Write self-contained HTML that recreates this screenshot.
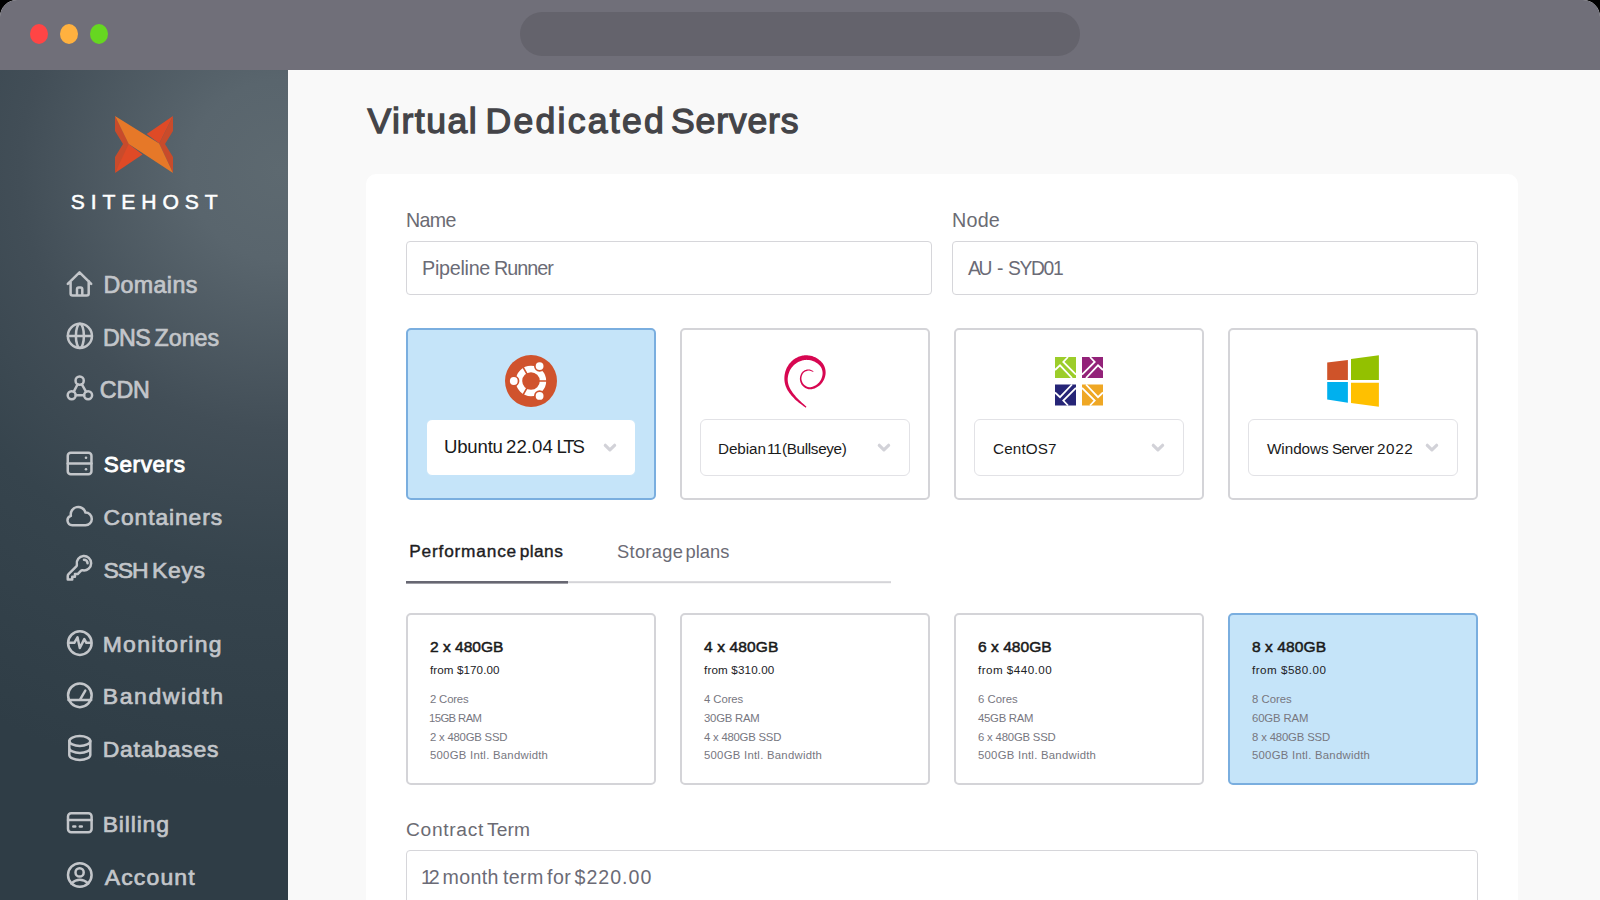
<!DOCTYPE html>
<html><head><meta charset="utf-8">
<style>
*{box-sizing:border-box;margin:0;padding:0}
html,body{width:1600px;height:900px;overflow:hidden;background:#000;font-family:"Liberation Sans",sans-serif}
#win{position:absolute;left:0;top:0;width:1600px;height:900px;border-radius:17px 17px 0 0;overflow:hidden;background:#f9f9f9}
#bar{position:absolute;left:0;top:0;width:1600px;height:70px;background:#706f79}
.dot{position:absolute;top:24px;width:18px;height:20px;border-radius:50%}
#url{position:absolute;left:520px;top:12px;width:560px;height:44px;border-radius:22px;background:#64636c}
#side{position:absolute;left:0;top:70px;width:288px;height:830px;background:radial-gradient(circle at 280px 100px,#5d6970 0px,#59656d 90px,#424e57 260px,#36444d 400px,#2f3d46 620px)}
.t{position:absolute;white-space:nowrap;line-height:1}
.abs{position:absolute}
#card{position:absolute;left:366px;top:174px;width:1152px;height:760px;background:#fff;border-radius:10px}
.inp{position:absolute;height:54px;border:1px solid #d6d6da;border-radius:4px;background:#fff}
.os{position:absolute;top:328px;width:250px;height:172px;border:2px solid #d4d4d8;border-radius:5px;background:#fff}
.sel{border-color:#7aaedf !important;background:#c5e4f9 !important}
.sl{position:absolute;left:18px;top:89px;width:210px;height:57px;border:1px solid #e2e2e6;border-radius:6px;background:#fff}
.sel .sl{border-color:#c5e4f9}
.plan{position:absolute;top:613px;width:250px;height:172px;border:2px solid #d4d4d8;border-radius:5px;background:#fff}
</style></head><body>
<div id="win">
<div id="bar">
 <div class="dot" style="left:30px;background:#ff4545"></div>
 <div class="dot" style="left:60px;background:#ffb13f"></div>
 <div class="dot" style="left:90px;background:#66d721"></div>
 <div id="url"></div>
</div>
<div id="side"></div>
<svg class="abs" style="left:0;top:0" width="288" height="900" viewBox="0 0 288 900">
 <g transform="translate(115 116)">
  <polygon points="0,0 15,30 0,57 0,41 8,28 0,15" fill="#c84b2b"/>
  <polygon points="13.75,28 27.5,38.5 0,57" fill="#df4a26"/>
  <polygon points="58,0 58,15 50,28 58,41 58,57 44.2,27.5" fill="#c84b2b"/>
  <polygon points="31.7,17.9 58,0 44.2,27.5" fill="#df4a26"/>
  <polygon points="0,0 44.2,27.5 58,57 13.75,28" fill="#e67828"/>
 </g>
 <g fill="none" stroke="#c3c6ca" stroke-width="2.5" stroke-linecap="round" stroke-linejoin="round">
  <path d="M67.8 283.9 L79.5 272.3 L91.2 283.9 M70.6 281 V293.5 Q70.6 295.5 72.6 295.5 H86.7 Q88.7 295.5 88.7 293.5 V281 M77 295.5 V289.3 Q77 287.6 78.7 287.6 H80.6 Q82.3 287.6 82.3 289.3 V295.5"/>
  <circle cx="79.9" cy="335.9" r="12.05"/>
  <ellipse cx="79.9" cy="335.9" rx="4" ry="12.05"/>
  <path d="M67.9 335.9 H91.9"/>
  <circle cx="79.65" cy="380.65" r="4.1"/>
  <circle cx="71.7" cy="395.2" r="4.0"/>
  <circle cx="88.1" cy="395.2" r="4.0"/>
  <path d="M77.6 384.2 L73.8 391.6 M81.7 384.2 L86 391.6 M75.7 395.2 H84.1"/>
  <rect x="67.75" y="452.85" width="23.7" height="21.5" rx="3"/>
  <path d="M67.75 463.6 H91.45"/>
  <path d="M72.3 525.2 A4.8 4.8 0 0 1 70.86 515.83 A7.5 7.5 0 0 1 85.5 512.6 A6.3 6.3 0 0 1 85.5 525.2 Z"/>
  <g transform="translate(65.05 553.35) scale(1.2)" stroke-width="2.08">
   <path d="M15.75 5.25a3 3 0 013 3m3 0a6 6 0 01-7.029 5.912c-.563-.097-1.159.026-1.563.43L10.5 17.25H8.25v2.25H6v2.25H2.25v-2.818c0-.597.237-1.17.659-1.591l6.499-6.499c.404-.404.527-1 .43-1.563A6 6 0 1121.75 8.25z"/>
  </g>
  <circle cx="79.85" cy="643.1" r="11.8"/>
  <path d="M69.3 642.8 H74.3 L77.5 637.3 L79.8 648 L84.3 639.1 L86.4 642.8 H90.3"/>
  <circle cx="79.85" cy="695.35" r="11.8"/>
  <path d="M68.5 700 H91.2 M80.2 699.3 L85.3 690.6"/>
  <ellipse cx="79.8" cy="741" rx="10.5" ry="4.9"/>
  <path d="M69.3 741 V755 A10.5 4.9 0 0 0 90.3 755 V741 M69.3 748 A10.5 4.9 0 0 0 90.3 748"/>
  <rect x="68" y="813.2" width="23.6" height="19.1" rx="3.2"/>
  <path d="M68 820 H91.6 M73.3 826.5 H75.3 M79.8 826.5 H81.8"/>
  <circle cx="79.8" cy="875" r="11.8"/>
  <circle cx="79.6" cy="872.4" r="4.1"/>
  <path d="M71.3 883.4 Q79.8 876.2 88.3 883.4"/>
 </g>
 <circle cx="86" cy="457.8" r="1.3" fill="#c3c6ca"/>
 <circle cx="86" cy="469.2" r="1.3" fill="#c3c6ca"/>
</svg>
<div id="card"></div>
<div class="inp" style="left:406px;top:241px;width:526px"></div>
<div class="inp" style="left:952px;top:241px;width:526px"></div>
<div class="os sel" style="left:406px"><div class="sl"></div></div>
<div class="os" style="left:680px"><div class="sl"></div></div>
<div class="os" style="left:954px"><div class="sl"></div></div>
<div class="os" style="left:1228px"><div class="sl"></div></div>
<svg class="abs" style="left:0;top:0" width="1600" height="900" viewBox="0 0 1600 900">
 <g fill="none" stroke="#d2d2d8" stroke-width="3.2" stroke-linecap="round" stroke-linejoin="round">
  <path d="M605.3 445.3 L609.9 449.8 L614.6 445.3"/>
  <path d="M879.3 445.3 L883.9 449.8 L888.6 445.3"/>
  <path d="M1153.3 445.3 L1157.9 449.8 L1162.6 445.3"/>
  <path d="M1427.3 445.3 L1431.9 449.8 L1436.6 445.3"/>
 </g>
 <!-- ubuntu -->
 <g>
  <circle cx="531" cy="381" r="26" fill="#d0532d"/>
  <circle cx="531" cy="381" r="12" fill="none" stroke="#fff" stroke-width="6.4"/>
  <path d="M531 381 L551 381 M531 381 L521 363.7 M531 381 L521 398.3" stroke="#d0532d" stroke-width="1.6"/>
  <circle cx="513.8" cy="381" r="5.6" fill="#d0532d"/>
  <circle cx="539.6" cy="366.1" r="5.6" fill="#d0532d"/>
  <circle cx="539.6" cy="395.9" r="5.6" fill="#d0532d"/>
  <circle cx="513.8" cy="381" r="3.9" fill="#fff"/>
  <circle cx="539.6" cy="366.1" r="3.9" fill="#fff"/>
  <circle cx="539.6" cy="395.9" r="3.9" fill="#fff"/>
 </g>
 <!-- debian -->
 <path fill="#d70751" d="M806.44 406.77 L805.96 406.29 L805.33 405.71 L804.59 405.04 L803.76 404.30 L802.86 403.50 L801.91 402.65 L800.94 401.76 L799.97 400.87 L799.02 399.97 L798.13 399.08 L797.31 398.23 L796.59 397.42 L795.89 396.64 L795.21 395.85 L794.54 395.05 L793.89 394.26 L793.27 393.45 L792.67 392.65 L792.10 391.85 L791.56 391.06 L791.06 390.27 L790.60 389.48 L790.18 388.71 L789.80 387.94 L789.45 387.18 L789.13 386.42 L788.84 385.67 L788.59 384.92 L788.37 384.17 L788.18 383.43 L788.02 382.69 L787.89 381.94 L787.79 381.20 L787.73 380.46 L787.69 379.71 L787.69 378.97 L787.74 378.21 L787.82 377.44 L787.93 376.65 L788.07 375.86 L788.25 375.06 L788.46 374.27 L788.69 373.48 L788.95 372.71 L789.24 371.96 L789.55 371.23 L789.88 370.53 L790.23 369.87 L790.60 369.24 L791.01 368.60 L791.44 367.98 L791.91 367.36 L792.41 366.76 L792.93 366.18 L793.47 365.62 L794.02 365.08 L794.59 364.57 L795.17 364.08 L795.75 363.64 L796.34 363.22 L796.92 362.82 L797.53 362.44 L798.17 362.08 L798.82 361.74 L799.49 361.43 L800.17 361.14 L800.85 360.88 L801.54 360.65 L802.23 360.45 L802.92 360.28 L803.60 360.15 L804.27 360.05 L804.94 359.96 L805.64 359.90 L806.36 359.87 L807.09 359.88 L807.83 359.91 L808.57 359.97 L809.31 360.07 L810.05 360.19 L810.77 360.34 L811.48 360.52 L812.16 360.72 L812.82 360.95 L813.47 361.20 L814.15 361.50 L814.83 361.84 L815.52 362.22 L816.20 362.63 L816.86 363.06 L817.51 363.52 L818.12 363.99 L818.70 364.47 L819.23 364.96 L819.70 365.44 L820.12 365.91 L820.49 366.39 L820.83 366.89 L821.13 367.43 L821.41 367.98 L821.66 368.55 L821.88 369.14 L822.07 369.74 L822.23 370.35 L822.36 370.97 L822.46 371.58 L822.54 372.19 L822.59 372.78 L822.60 373.37 L822.57 373.97 L822.51 374.58 L822.42 375.21 L822.30 375.85 L822.15 376.48 L821.97 377.11 L821.76 377.74 L821.54 378.35 L821.29 378.94 L821.03 379.50 L820.76 380.03 L820.47 380.54 L820.14 381.04 L819.79 381.53 L819.41 382.01 L819.00 382.48 L818.58 382.93 L818.14 383.37 L817.68 383.78 L817.22 384.17 L816.74 384.54 L816.26 384.88 L815.78 385.20 L815.28 385.50 L814.75 385.79 L814.20 386.06 L813.63 386.31 L813.06 386.54 L812.48 386.75 L811.90 386.92 L811.33 387.06 L810.77 387.17 L810.23 387.24 L809.72 387.26 L809.24 387.25 L808.77 387.19 L808.27 387.08 L807.76 386.93 L807.24 386.73 L806.72 386.50 L806.21 386.23 L805.71 385.94 L805.22 385.62 L804.77 385.29 L804.34 384.94 L803.95 384.59 L803.61 384.24 L803.30 383.87 L803.00 383.48 L802.73 383.05 L802.48 382.59 L802.25 382.11 L802.04 381.62 L801.86 381.11 L801.71 380.60 L801.59 380.09 L801.50 379.59 L801.44 379.10 L801.41 378.62 L801.43 378.15 L801.47 377.64 L801.56 377.12 L801.67 376.59 L801.81 376.06 L801.99 375.53 L802.18 375.01 L802.40 374.51 L802.64 374.05 L802.90 373.61 L803.17 373.22 L803.44 372.88 L803.74 372.58 L804.08 372.29 L804.46 372.02 L804.88 371.77 L805.32 371.54 L805.78 371.33 L806.25 371.15 L806.72 370.99 L807.19 370.86 L807.65 370.75 L808.09 370.67 L808.49 370.62 L808.86 370.60 L809.26 370.62 L809.68 370.69 L810.12 370.80 L810.57 370.93 L811.01 371.09 L811.44 371.25 L811.85 371.42 L812.23 371.57 L812.57 371.72 L812.88 371.83 L813.13 371.91 L813.42 371.13 L813.21 371.03 L812.94 370.90 L812.62 370.73 L812.25 370.54 L811.84 370.34 L811.40 370.13 L810.94 369.93 L810.45 369.74 L809.95 369.59 L809.44 369.46 L808.92 369.39 L808.41 369.38 L807.91 369.43 L807.41 369.51 L806.89 369.62 L806.36 369.76 L805.82 369.92 L805.28 370.12 L804.75 370.34 L804.24 370.60 L803.74 370.88 L803.26 371.20 L802.82 371.56 L802.42 371.95 L802.06 372.38 L801.72 372.85 L801.41 373.35 L801.12 373.89 L800.86 374.45 L800.63 375.03 L800.42 375.63 L800.24 376.23 L800.10 376.84 L799.99 377.44 L799.92 378.04 L799.90 378.62 L799.90 379.20 L799.95 379.79 L800.03 380.38 L800.15 380.98 L800.30 381.58 L800.48 382.18 L800.70 382.76 L800.95 383.34 L801.23 383.89 L801.54 384.43 L801.88 384.94 L802.26 385.42 L802.66 385.87 L803.11 386.31 L803.60 386.74 L804.12 387.15 L804.67 387.54 L805.24 387.91 L805.84 388.24 L806.45 388.54 L807.08 388.81 L807.72 389.03 L808.38 389.19 L809.03 389.30 L809.70 389.35 L810.38 389.35 L811.06 389.29 L811.75 389.18 L812.44 389.04 L813.12 388.86 L813.81 388.64 L814.48 388.40 L815.13 388.13 L815.77 387.85 L816.39 387.54 L816.98 387.21 L817.56 386.87 L818.13 386.49 L818.70 386.08 L819.25 385.64 L819.80 385.18 L820.33 384.70 L820.84 384.19 L821.33 383.66 L821.79 383.11 L822.24 382.54 L822.65 381.95 L823.03 381.34 L823.39 380.73 L823.73 380.08 L824.05 379.41 L824.34 378.71 L824.62 378.00 L824.86 377.27 L825.08 376.53 L825.26 375.77 L825.41 375.01 L825.53 374.25 L825.60 373.49 L825.62 372.73 L825.61 371.99 L825.57 371.24 L825.49 370.49 L825.38 369.72 L825.23 368.95 L825.05 368.18 L824.82 367.42 L824.54 366.66 L824.23 365.90 L823.86 365.16 L823.45 364.44 L822.98 363.74 L822.47 363.06 L821.90 362.40 L821.28 361.74 L820.62 361.11 L819.92 360.49 L819.20 359.90 L818.44 359.33 L817.66 358.79 L816.87 358.28 L816.06 357.80 L815.24 357.37 L814.42 356.98 L813.59 356.65 L812.73 356.35 L811.85 356.09 L810.96 355.87 L810.06 355.68 L809.14 355.53 L808.22 355.41 L807.30 355.33 L806.39 355.29 L805.47 355.29 L804.56 355.32 L803.66 355.40 L802.77 355.54 L801.89 355.73 L801.00 355.96 L800.13 356.22 L799.26 356.53 L798.41 356.86 L797.57 357.23 L796.75 357.64 L795.94 358.07 L795.16 358.53 L794.40 359.02 L793.66 359.54 L792.96 360.10 L792.27 360.69 L791.60 361.32 L790.95 361.98 L790.31 362.66 L789.70 363.37 L789.12 364.11 L788.56 364.86 L788.03 365.64 L787.54 366.43 L787.08 367.24 L786.67 368.06 L786.29 368.90 L785.95 369.76 L785.64 370.65 L785.36 371.56 L785.12 372.48 L784.90 373.41 L784.73 374.34 L784.58 375.28 L784.47 376.21 L784.40 377.14 L784.37 378.06 L784.38 378.96 L784.41 379.85 L784.47 380.73 L784.58 381.60 L784.72 382.47 L784.89 383.34 L785.10 384.20 L785.34 385.06 L785.63 385.91 L785.94 386.76 L786.29 387.61 L786.67 388.46 L787.09 389.30 L787.56 390.15 L788.08 390.99 L788.63 391.84 L789.22 392.67 L789.83 393.50 L790.48 394.33 L791.15 395.15 L791.84 395.96 L792.56 396.77 L793.29 397.56 L794.03 398.35 L794.79 399.13 L795.64 399.92 L796.58 400.75 L797.58 401.59 L798.61 402.43 L799.67 403.26 L800.72 404.08 L801.74 404.86 L802.71 405.58 L803.61 406.25 L804.41 406.83 L805.09 407.33 L805.63 407.72Z"/>
 <!-- centos -->
 <g>
  <rect x="1055" y="357" width="21" height="21" fill="#9ccd2a"/>
  <rect x="1082" y="357" width="21" height="21" fill="#932279"/>
  <rect x="1055" y="384.5" width="21" height="21" fill="#262577"/>
  <rect x="1082" y="384.5" width="21" height="21" fill="#efa724"/>
  <g fill="none" stroke="#fff" stroke-width="1.8">
   <path d="M1068 357 L1063.3 362 L1076 374.7 M1055 370 L1060 365.3 L1072 378"/>
   <path d="M1090 357 L1094.7 362 L1082 374.7 M1103 370 L1098 365.3 L1086 378"/>
   <path d="M1068 405.5 L1063.3 400.5 L1076 387.8 M1055 392.5 L1060 397.2 L1072 384.5"/>
   <path d="M1090 405.5 L1094.7 400.5 L1082 387.8 M1103 392.5 L1098 397.2 L1086 384.5"/>
  </g>
 </g>
 <!-- windows -->
 <g>
  <polygon points="1327.2,362.4 1347.9,360 1347.9,380 1327.2,380" fill="#cf5329"/>
  <polygon points="1351,359 1378.9,355.2 1378.9,380 1351,380" fill="#93c100"/>
  <polygon points="1327.2,382 1347.9,382 1347.9,402.7 1327.2,399.6" fill="#00b0ee"/>
  <polygon points="1351,382.7 1378.9,382.7 1378.9,406.8 1351,403" fill="#ffc000"/>
 </g>
 <!-- tabs underline -->
 <rect x="406" y="581.2" width="485" height="2" fill="#d4d4d8"/>
 <rect x="406" y="581" width="162" height="2.6" fill="#676772"/>
</svg>
<div class="plan" style="left:406px"></div>
<div class="plan" style="left:680px"></div>
<div class="plan" style="left:954px"></div>
<div class="plan sel" style="left:1228px"></div>
<div class="inp" style="left:406px;top:850px;width:1072px;height:80px"></div>
<div class="t" id="title1" style="left:367.50px;top:103.66px;font-size:35.60px;letter-spacing:1.500px;font-weight:normal;color:#444448;-webkit-text-stroke:1.3px #444448">Virtual</div>
<div class="t" id="title2" style="left:485.50px;top:103.66px;font-size:35.60px;letter-spacing:2.251px;font-weight:normal;color:#444448;-webkit-text-stroke:1.3px #444448">Dedicated</div>
<div class="t" id="title3" style="left:671.00px;top:103.66px;font-size:35.60px;letter-spacing:0.833px;font-weight:normal;color:#444448;-webkit-text-stroke:1.3px #444448">Servers</div>
<div class="t" id="logo" style="left:70.80px;top:191.13px;font-size:21.10px;letter-spacing:5.920px;font-weight:normal;color:#ffffff;-webkit-text-stroke:0.55px #fff">SITEHOST</div>
<div class="t" id="n1" style="left:103.40px;top:274.21px;font-size:23.26px;letter-spacing:0.364px;font-weight:normal;color:#c3c6ca;-webkit-text-stroke:0.7px #c3c6ca">Domains</div>
<div class="t" id="n2_0" style="left:103.00px;top:326.71px;font-size:23.26px;letter-spacing:-0.700px;font-weight:normal;color:#c3c6ca;-webkit-text-stroke:0.7px #c3c6ca">DNS</div>
<div class="t" id="n2_1" style="left:154.50px;top:326.71px;font-size:23.26px;letter-spacing:0.000px;font-weight:normal;color:#c3c6ca;-webkit-text-stroke:0.7px #c3c6ca">Zones</div>
<div class="t" id="n3" style="left:99.70px;top:379.21px;font-size:23.26px;letter-spacing:-0.100px;font-weight:normal;color:#c3c6ca;-webkit-text-stroke:0.7px #c3c6ca">CDN</div>
<div class="t" id="n4" style="left:103.80px;top:454.22px;font-size:22.53px;letter-spacing:0.600px;font-weight:normal;color:#ffffff;-webkit-text-stroke:0.9px #ffffff">Servers</div>
<div class="t" id="n5" style="left:103.60px;top:506.48px;font-size:22.82px;letter-spacing:0.913px;font-weight:normal;color:#c3c6ca;-webkit-text-stroke:0.7px #c3c6ca">Containers</div>
<div class="t" id="n6_0" style="left:103.50px;top:558.85px;font-size:22.97px;letter-spacing:-1.100px;font-weight:normal;color:#c3c6ca;-webkit-text-stroke:0.7px #c3c6ca">SSH</div>
<div class="t" id="n6_1" style="left:152.00px;top:558.85px;font-size:22.97px;letter-spacing:0.666px;font-weight:normal;color:#c3c6ca;-webkit-text-stroke:0.7px #c3c6ca">Keys</div>
<div class="t" id="n7" style="left:102.70px;top:633.25px;font-size:22.97px;letter-spacing:1.294px;font-weight:normal;color:#c3c6ca;-webkit-text-stroke:0.7px #c3c6ca">Monitoring</div>
<div class="t" id="n8" style="left:102.70px;top:684.55px;font-size:22.97px;letter-spacing:1.625px;font-weight:normal;color:#c3c6ca;-webkit-text-stroke:0.7px #c3c6ca">Bandwidth</div>
<div class="t" id="n9" style="left:102.70px;top:738.25px;font-size:22.97px;letter-spacing:0.750px;font-weight:normal;color:#c3c6ca;-webkit-text-stroke:0.7px #c3c6ca">Databases</div>
<div class="t" id="n10" style="left:102.70px;top:813.35px;font-size:22.97px;letter-spacing:0.834px;font-weight:normal;color:#c3c6ca;-webkit-text-stroke:0.7px #c3c6ca">Billing</div>
<div class="t" id="n11" style="left:104.70px;top:866.25px;font-size:22.97px;letter-spacing:1.167px;font-weight:normal;color:#c3c6ca;-webkit-text-stroke:0.7px #c3c6ca">Account</div>
<div class="t" id="l1" style="left:406.00px;top:211.29px;font-size:19.62px;letter-spacing:-0.667px;font-weight:normal;color:#6b6b73;">Name</div>
<div class="t" id="l2" style="left:952.00px;top:211.36px;font-size:19.77px;letter-spacing:0.202px;font-weight:normal;color:#6b6b73;">Node</div>
<div class="t" id="i1_0" style="left:422.00px;top:259.46px;font-size:19.77px;letter-spacing:-0.286px;font-weight:normal;color:#6b6b76;">Pipeline</div>
<div class="t" id="i1_1" style="left:494.00px;top:259.46px;font-size:19.77px;letter-spacing:-1.000px;font-weight:normal;color:#6b6b76;">Runner</div>
<div class="t" id="i2_0" style="left:968.00px;top:258.56px;font-size:19.30px;letter-spacing:-2.400px;font-weight:normal;color:#6b6b76;">AU</div>
<div class="t" id="i2_1" style="left:997.00px;top:258.56px;font-size:19.30px;letter-spacing:0.000px;font-weight:normal;color:#6b6b76;">-</div>
<div class="t" id="i2_2" style="left:1008.00px;top:258.56px;font-size:19.30px;letter-spacing:-1.350px;font-weight:normal;color:#6b6b76;">SYD01</div>
<div class="t" id="os1_0" style="left:444.00px;top:437.75px;font-size:18.60px;letter-spacing:-0.200px;font-weight:normal;color:#1a1a1a;">Ubuntu</div>
<div class="t" id="os1_1" style="left:506.00px;top:437.75px;font-size:18.60px;letter-spacing:0.050px;font-weight:normal;color:#1a1a1a;">22.04</div>
<div class="t" id="os1_2" style="left:556.50px;top:437.75px;font-size:18.60px;letter-spacing:-2.200px;font-weight:normal;color:#1a1a1a;">LTS</div>
<div class="t" id="os2_0" style="left:718.00px;top:440.88px;font-size:15.26px;letter-spacing:-0.080px;font-weight:normal;color:#1a1a1a;">Debian</div>
<div class="t" id="os2_1" style="left:767.00px;top:440.88px;font-size:15.26px;letter-spacing:-1.000px;font-weight:normal;color:#1a1a1a;">11</div>
<div class="t" id="os2_2" style="left:782.00px;top:440.88px;font-size:15.26px;letter-spacing:-0.334px;font-weight:normal;color:#1a1a1a;">(Bullseye)</div>
<div class="t" id="os3_0" style="left:993.00px;top:441.18px;font-size:15.26px;letter-spacing:0.160px;font-weight:normal;color:#1a1a1a;">CentOS</div>
<div class="t" id="os3_1" style="left:1048.00px;top:441.18px;font-size:15.26px;letter-spacing:0.000px;font-weight:normal;color:#1a1a1a;">7</div>
<div class="t" id="os4_0" style="left:1267.00px;top:440.58px;font-size:15.26px;letter-spacing:-0.033px;font-weight:normal;color:#1a1a1a;">Windows</div>
<div class="t" id="os4_1" style="left:1332.00px;top:440.58px;font-size:15.26px;letter-spacing:-0.560px;font-weight:normal;color:#1a1a1a;">Server</div>
<div class="t" id="os4_2" style="left:1377.00px;top:440.58px;font-size:15.26px;letter-spacing:0.601px;font-weight:normal;color:#1a1a1a;">2022</div>
<div class="t" id="tab1_0" style="left:409.25px;top:543.25px;font-size:17.30px;letter-spacing:0.800px;font-weight:normal;color:#1d1d1f;-webkit-text-stroke:0.4px #1d1d1f">Performance</div>
<div class="t" id="tab1_1" style="left:519.75px;top:543.25px;font-size:17.30px;letter-spacing:0.426px;font-weight:normal;color:#1d1d1f;-webkit-text-stroke:0.4px #1d1d1f">plans</div>
<div class="t" id="tab2_0" style="left:617.00px;top:543.40px;font-size:18.31px;letter-spacing:0.301px;font-weight:normal;color:#6b6b75;">Storage</div>
<div class="t" id="tab2_1" style="left:685.50px;top:543.40px;font-size:18.31px;letter-spacing:0.050px;font-weight:normal;color:#6b6b75;">plans</div>
<div class="t" id="ct_0" style="left:406.00px;top:820.05px;font-size:19.19px;letter-spacing:0.687px;font-weight:normal;color:#6b6b73;">Contract</div>
<div class="t" id="ct_1" style="left:487.00px;top:820.05px;font-size:19.19px;letter-spacing:0.133px;font-weight:normal;color:#6b6b73;">Term</div>
<div class="t" id="ci_0" style="left:421.00px;top:868.29px;font-size:19.62px;letter-spacing:-3.200px;font-weight:normal;color:#6b6b76;">12</div>
<div class="t" id="ci_1" style="left:442.50px;top:868.29px;font-size:19.62px;letter-spacing:0.350px;font-weight:normal;color:#6b6b76;">month</div>
<div class="t" id="ci_2" style="left:503.00px;top:868.29px;font-size:19.62px;letter-spacing:0.334px;font-weight:normal;color:#6b6b76;">term</div>
<div class="t" id="ci_3" style="left:547.00px;top:868.29px;font-size:19.62px;letter-spacing:0.500px;font-weight:normal;color:#6b6b76;">for</div>
<div class="t" id="ci_4" style="left:574.50px;top:868.29px;font-size:19.62px;letter-spacing:1.000px;font-weight:normal;color:#6b6b76;">$220.00</div>
<div class="t" id="p0a" style="left:430.00px;top:639.23px;font-size:15.55px;letter-spacing:0.000px;font-weight:normal;color:#1a1a1a;-webkit-text-stroke:0.5px #1a1a1a">2 x 480GB</div>
<div class="t" id="p0b" style="left:430.00px;top:663.75px;font-size:11.63px;letter-spacing:0.091px;font-weight:normal;color:#222226;">from $170.00</div>
<div class="t" id="p0c" style="left:430.00px;top:693.50px;font-size:11.34px;letter-spacing:-0.167px;font-weight:normal;color:#77777f;">2 Cores</div>
<div class="t" id="p0d" style="left:429.00px;top:712.50px;font-size:11.34px;letter-spacing:-0.606px;font-weight:normal;color:#77777f;">15GB RAM</div>
<div class="t" id="p0e" style="left:430.00px;top:732.00px;font-size:11.34px;letter-spacing:-0.212px;font-weight:normal;color:#77777f;">2 x 480GB SSD</div>
<div class="t" id="p0f" style="left:430.00px;top:749.80px;font-size:11.34px;letter-spacing:0.260px;font-weight:normal;color:#77777f;">500GB Intl. Bandwidth</div>
<div class="t" id="p1a" style="left:704.00px;top:639.23px;font-size:15.55px;letter-spacing:0.125px;font-weight:normal;color:#1a1a1a;-webkit-text-stroke:0.5px #1a1a1a">4 x 480GB</div>
<div class="t" id="p1b" style="left:704.00px;top:663.75px;font-size:11.63px;letter-spacing:0.166px;font-weight:normal;color:#222226;">from $310.00</div>
<div class="t" id="p1c" style="left:704.00px;top:693.50px;font-size:11.34px;letter-spacing:-0.070px;font-weight:normal;color:#77777f;">4 Cores</div>
<div class="t" id="p1d" style="left:704.00px;top:712.50px;font-size:11.34px;letter-spacing:-0.232px;font-weight:normal;color:#77777f;">30GB RAM</div>
<div class="t" id="p1e" style="left:704.00px;top:732.00px;font-size:11.34px;letter-spacing:-0.220px;font-weight:normal;color:#77777f;">4 x 480GB SSD</div>
<div class="t" id="p1f" style="left:704.00px;top:749.80px;font-size:11.34px;letter-spacing:0.260px;font-weight:normal;color:#77777f;">500GB Intl. Bandwidth</div>
<div class="t" id="p2a" style="left:978.00px;top:639.23px;font-size:15.55px;letter-spacing:0.025px;font-weight:normal;color:#1a1a1a;-webkit-text-stroke:0.5px #1a1a1a">6 x 480GB</div>
<div class="t" id="p2b" style="left:978.00px;top:663.75px;font-size:11.63px;letter-spacing:0.473px;font-weight:normal;color:#222226;">from $440.00</div>
<div class="t" id="p2c" style="left:978.00px;top:693.50px;font-size:11.34px;letter-spacing:0.000px;font-weight:normal;color:#77777f;">6 Cores</div>
<div class="t" id="p2d" style="left:978.00px;top:712.50px;font-size:11.34px;letter-spacing:-0.259px;font-weight:normal;color:#77777f;">45GB RAM</div>
<div class="t" id="p2e" style="left:978.00px;top:732.00px;font-size:11.34px;letter-spacing:-0.182px;font-weight:normal;color:#77777f;">6 x 480GB SSD</div>
<div class="t" id="p2f" style="left:978.00px;top:749.80px;font-size:11.34px;letter-spacing:0.260px;font-weight:normal;color:#77777f;">500GB Intl. Bandwidth</div>
<div class="t" id="p3a" style="left:1252.00px;top:639.23px;font-size:15.55px;letter-spacing:0.075px;font-weight:normal;color:#1a1a1a;-webkit-text-stroke:0.5px #1a1a1a">8 x 480GB</div>
<div class="t" id="p3b" style="left:1252.00px;top:663.75px;font-size:11.63px;letter-spacing:0.489px;font-weight:normal;color:#222226;">from $580.00</div>
<div class="t" id="p3c" style="left:1252.00px;top:693.50px;font-size:11.34px;letter-spacing:-0.000px;font-weight:normal;color:#77777f;">8 Cores</div>
<div class="t" id="p3d" style="left:1252.00px;top:712.50px;font-size:11.34px;letter-spacing:-0.116px;font-weight:normal;color:#77777f;">60GB RAM</div>
<div class="t" id="p3e" style="left:1252.00px;top:732.00px;font-size:11.34px;letter-spacing:-0.152px;font-weight:normal;color:#77777f;">8 x 480GB SSD</div>
<div class="t" id="p3f" style="left:1252.00px;top:749.80px;font-size:11.34px;letter-spacing:0.260px;font-weight:normal;color:#77777f;">500GB Intl. Bandwidth</div>
</div>
</body></html>
